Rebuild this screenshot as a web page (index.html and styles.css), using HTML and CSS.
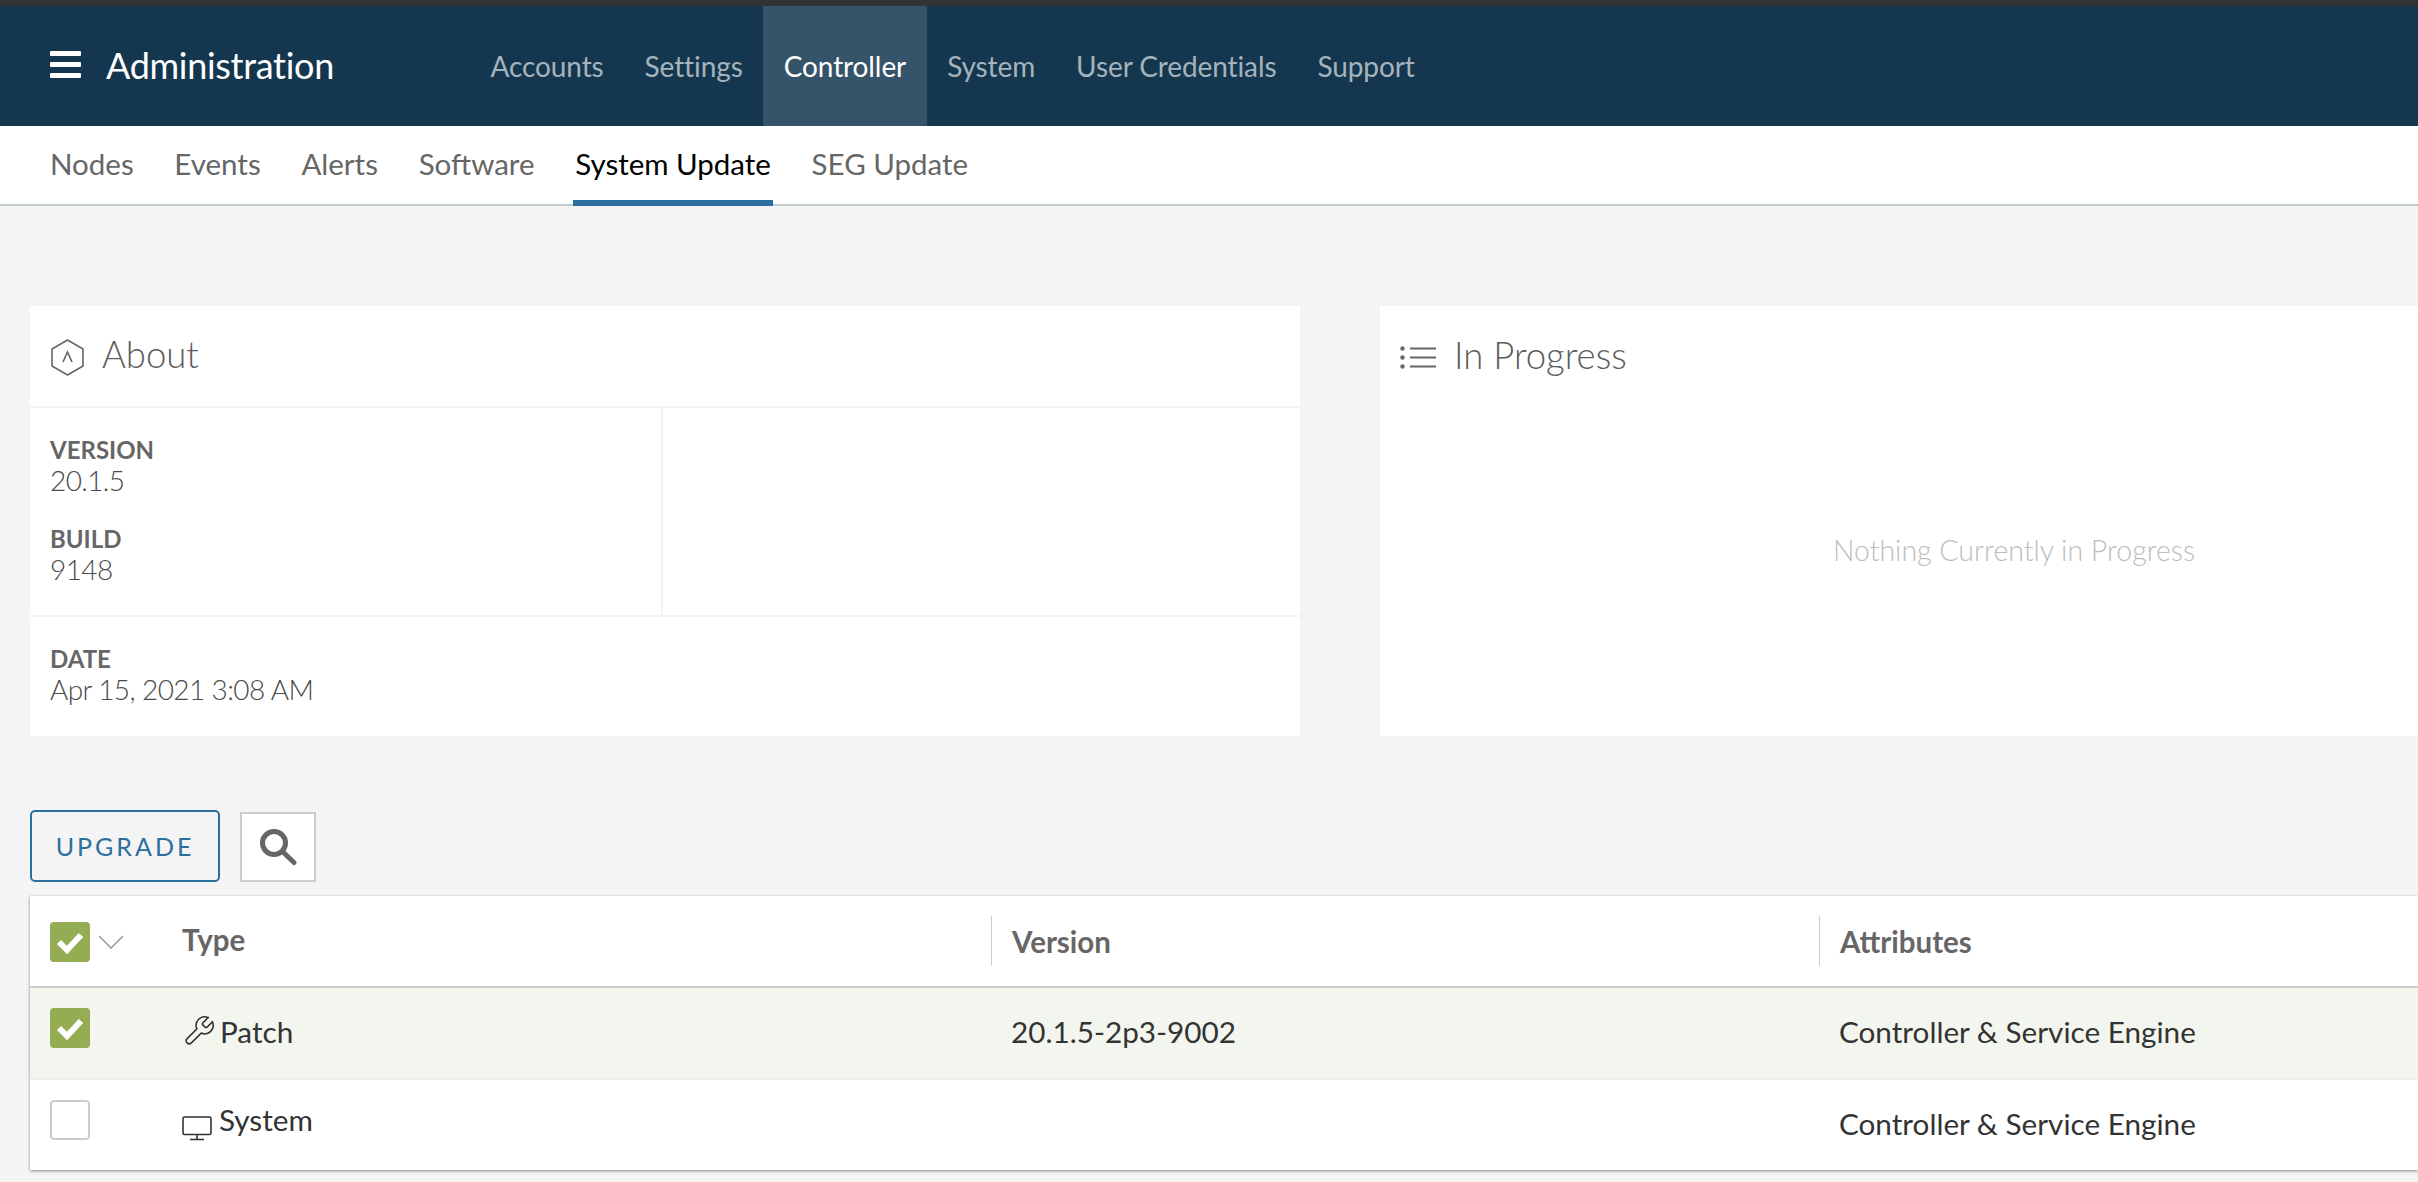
FILE: index.html
```html
<!DOCTYPE html>
<html lang="en">
<head>
  <meta charset="UTF-8">
  <title>Administration - System Update</title>
  <link rel="stylesheet" href="styles.css">
</head>
<body>
  <!-- Top navigation -->
  <header class="topbar">
    <div class="brand">
      <div class="burger"><span></span><span></span><span></span></div>
      <div class="brand-name">Administration</div>
    </div>
    <nav class="topnav">
      <a>Accounts</a>
      <a>Settings</a>
      <a class="active">Controller</a>
      <a>System</a>
      <a>User Credentials</a>
      <a>Support</a>
    </nav>
  </header>

  <nav class="subnav">
    <a>Nodes</a>
    <a>Events</a>
    <a>Alerts</a>
    <a>Software</a>
    <a class="active">System Update</a>
    <a>SEG Update</a>
  </nav>

  <main class="content">
    <div class="cards">
      <section class="card">
        <div class="card-title">
          <svg class="about-icon" viewBox="0 0 33 37"><path d="M16.5 1 L32 10 V27 L16.5 36 L1 27 V10 Z" stroke-linejoin="round"/><path d="M12 23 L16.5 13 L21 23"/></svg>
          <span>About</span>
        </div>
        <div class="about-top">
          <div class="about-cell">
            <div class="field field-first"><b>VERSION</b><span>20.1.5</span></div>
            <div class="field"><b>BUILD</b><span>9148</span></div>
          </div>
          <div class="about-blank"></div>
        </div>
        <div class="about-date">
          <div class="field"><b>DATE</b><span>Apr 15, 2021 3:08 AM</span></div>
        </div>
      </section>

      <section class="card card-progress">
        <div class="card-title">
          <svg class="list-icon" viewBox="0 0 36 23"><circle cx="2.5" cy="2.5" r="2.2"/><circle cx="2.5" cy="11.5" r="2.2"/><circle cx="2.5" cy="20.5" r="2.2"/><path d="M10 2.5 H36 M10 11.5 H36 M10 20.5 H36"/></svg>
          <span>In Progress</span>
        </div>
        <div class="empty">Nothing Currently in Progress</div>
      </section>
    </div>

    <div class="actions">
      <button class="btn-upgrade">UPGRADE</button>
      <button class="btn-search">
        <svg viewBox="0 0 38 38"><circle cx="15" cy="15" r="11.5"/><path d="M24 24 L35 34.5"/></svg>
      </button>
    </div>

    <div class="table">
      <div class="row row-head">
        <div class="cell-check">
          <span class="check on"><svg viewBox="0 0 40 40"><path d="M9 20 L17 28 L31 13"/></svg></span>
          <svg class="chevron" viewBox="0 0 26 14"><path d="M1 1 L13 13 L25 1"/></svg>
        </div>
        <div class="cell">Type</div>
        <div class="cell cell-sep"><span>Version</span></div>
        <div class="cell cell-sep"><span>Attributes</span></div>
      </div>
      <div class="row row-selected">
        <div class="cell-check">
          <span class="check on"><svg viewBox="0 0 40 40"><path d="M9 20 L17 28 L31 13"/></svg></span>
        </div>
        <div class="cell cell-type">
          <svg class="type-icon wrench" viewBox="0 0 24 24"><path d="M14.7 6.3a1 1 0 0 0 0 1.4l1.6 1.6a1 1 0 0 0 1.4 0l3.77-3.77a6 6 0 0 1-7.94 7.94l-6.91 6.91a2.12 2.12 0 0 1-3-3l6.91-6.91a6 6 0 0 1 7.94-7.94l-3.76 3.76z"/></svg>
          <span>Patch</span>
        </div>
        <div class="cell cell-pad">20.1.5-2p3-9002</div>
        <div class="cell cell-pad">Controller &amp; Service Engine</div>
      </div>
      <div class="row row-last">
        <div class="cell-check">
          <span class="check"></span>
        </div>
        <div class="cell cell-type">
          <svg class="type-icon monitor" viewBox="0 0 30 25"><rect x="1" y="1" width="28" height="17.5" rx="1.5"/><path d="M15 18.5 V23 M8 23.5 H22"/></svg>
          <span>System</span>
        </div>
        <div class="cell cell-pad"></div>
        <div class="cell cell-pad">Controller &amp; Service Engine</div>
      </div>
    </div>
  </main>
</body>
</html>
```

FILE: styles.css
```css
* {
  box-sizing: border-box;
}
html, body {
  height: 100%;
}
body {
  margin: 0;
  overflow: hidden;
  background-color: #f4f4f4;
  font-family: Lato, "Open Sans", sans-serif;
  color: #666;
}

/* top bar */
.topbar {
  display: flex;
  height: 126px;
  background-color: #14374f;
  border-top: 6px solid #333;
  color: #fff;
}
.brand {
  display: flex;
  align-items: center;
  width: 470px;
  padding-left: 50px;
  padding-bottom: 3px;
}
.burger {
  width: 31px;
  margin-right: 25px;
}
.burger span {
  display: block;
  height: 5px;
  margin-bottom: 6px;
  background-color: #fff;
  border-radius: 1px;
}
.burger span:last-child {
  margin-bottom: 0;
}
.brand-name {
  font-size: 36px;
  font-weight: 400;
  letter-spacing: -.3px;
}
.topnav {
  display: flex;
}
.topnav a {
  display: flex;
  align-items: center;
  padding: 0 20.5px;
  font-size: 28px;
  font-weight: 400;
  letter-spacing: -.1px;
  color: #a5b3bc;
}
.topnav a.active {
  background-color: #365469;
  color: #fff;
}

/* second level tabs */
.subnav {
  display: flex;
  gap: 36.7px;
  height: 80px;
  padding-left: 48px;
  background-color: #fff;
  border-bottom: 2px solid #c0cdd0;
}
.subnav a {
  display: flex;
  align-items: center;
  height: 80px;
  padding: 0 2px 6px;
  font-size: 29.5px;
  font-weight: 400;
  color: #666;
}
.subnav a.active {
  color: #000;
  border-bottom: 6px solid #2b6f9f;
  padding-bottom: 0;
}

.content {
  padding: 100px 0 0 30px;
}

/* cards */
.cards {
  display: grid;
  grid-template-columns: 1270px 1fr;
  gap: 80px;
}
.card {
  height: 430px;
  background-color: #fff;
}
.card-title {
  display: flex;
  align-items: center;
  height: 102px;
  padding: 0 0 4px 21px;
  border-bottom: 2px solid #f4f4f4;
  font-size: 36.5px;
  font-weight: 300;
  color: #5c5c5c;
}
.card-title svg {
  fill: none;
  stroke: #666;
}
.about-icon {
  width: 33px;
  height: 37px;
  margin: 7px 18px 0 0;
  stroke-width: 1.6;
}
.list-icon {
  width: 36px;
  height: 23px;
  margin: 4px 18px 0 0;
  stroke-width: 2;
}
.list-icon circle {
  fill: #666;
  stroke: none;
}
.about-top {
  display: flex;
  height: 209px;
  border-bottom: 2px solid #f4f4f4;
}
.about-cell {
  width: 633px;
  padding-left: 20px;
  border-right: 2px solid #f4f4f4;
}
.field {
  padding-top: 28px;
}
.field-first {
  padding-top: 27px;
}
.field b {
  display: block;
  height: 30px;
  line-height: 30px;
  font-size: 24px;
  font-weight: 700;
  color: #666;
}
.field span {
  display: block;
  height: 31px;
  line-height: 31px;
  font-size: 28px;
  font-weight: 300;
  letter-spacing: -.6px;
  color: #4a4a4a;
}
.about-date {
  padding-left: 20px;
  margin-top: -1px;
}
.card-progress .card-title {
  border-bottom: none;
  padding-left: 20px;
}
.empty {
  padding-top: 126px;
  padding-left: 230px;
  text-align: center;
  line-height: 32px;
  font-size: 28.5px;
  font-weight: 300;
  color: #bdbdbd;
}

/* buttons */
.actions {
  display: flex;
  align-items: flex-end;
  gap: 20px;
  margin-top: 74px;
  height: 72px;
}
.btn-upgrade {
  width: 190px;
  height: 72px;
  padding: 0;
  background: none;
  border: 2px solid #2b6f9f;
  border-radius: 5px;
  font-family: Lato, sans-serif;
  font-size: 25px;
  font-weight: 400;
  letter-spacing: 3px;
  color: #2b6f9f;
}
.btn-search {
  display: flex;
  align-items: center;
  justify-content: center;
  width: 76px;
  height: 70px;
  padding: 0;
  background-color: #fff;
  border: 2px solid #ccc;
}
.btn-search svg {
  width: 38px;
  height: 38px;
  fill: none;
  stroke: #666;
  stroke-width: 5;
  stroke-linecap: round;
}

/* table */
.table {
  margin-top: 14px;
  background-color: #fff;
  box-shadow: 0 1px 3px rgba(0, 0, 0, .45);
}
.row {
  display: grid;
  grid-template-columns: 152px 809px 828px 1fr;
  font-size: 29.7px;
  color: #333;
}
.row-head {
  height: 92px;
  border-bottom: 2px solid #ccc;
  font-size: 29.5px;
  font-weight: 700;
  color: #666;
}
.row-selected {
  height: 92px;
  background-color: #f3f6ee;
  border-bottom: 2px solid #eee;
}
.row-last {
  height: 90px;
}
.cell-check {
  display: flex;
  padding: 26px 0 0 20px;
}
.row-selected .cell-check,
.row-last .cell-check {
  padding-top: 20px;
}
.check {
  width: 40px;
  height: 40px;
  background-color: #fff;
  border: 2px solid #ccc;
  border-radius: 4px;
}
.check.on {
  background-color: #94ad52;
  border: none;
}
.check svg {
  display: block;
  fill: none;
  stroke: #fff;
  stroke-width: 6;
}
.chevron {
  width: 26px;
  height: 14px;
  margin: 13px 0 0 8px;
  fill: none;
  stroke: #999;
  stroke-width: 1.5;
}
.cell {
  display: flex;
  align-items: center;
  padding-bottom: 4px;
}
.cell-sep {
  padding-bottom: 0;
  padding-top: 20px;
  align-items: flex-start;
}
.cell-sep span {
  display: flex;
  align-items: center;
  height: 50px;
  padding-left: 20px;
  border-left: 1px solid #ccc;
}
.cell-pad {
  padding-left: 20px;
  font-weight: 400;
}
.cell-type {
  font-weight: 400;
}
.row-last .cell-type span {
  margin-top: -8px;
}
.type-icon {
  fill: none;
  stroke: #333;
}
.wrench {
  width: 34px;
  height: 34px;
  margin-right: 4px;
  stroke-width: 1.1;
}
.monitor {
  width: 30px;
  height: 25px;
  margin: 10px 7px 0 0;
  stroke-width: 1.6;
}
```
